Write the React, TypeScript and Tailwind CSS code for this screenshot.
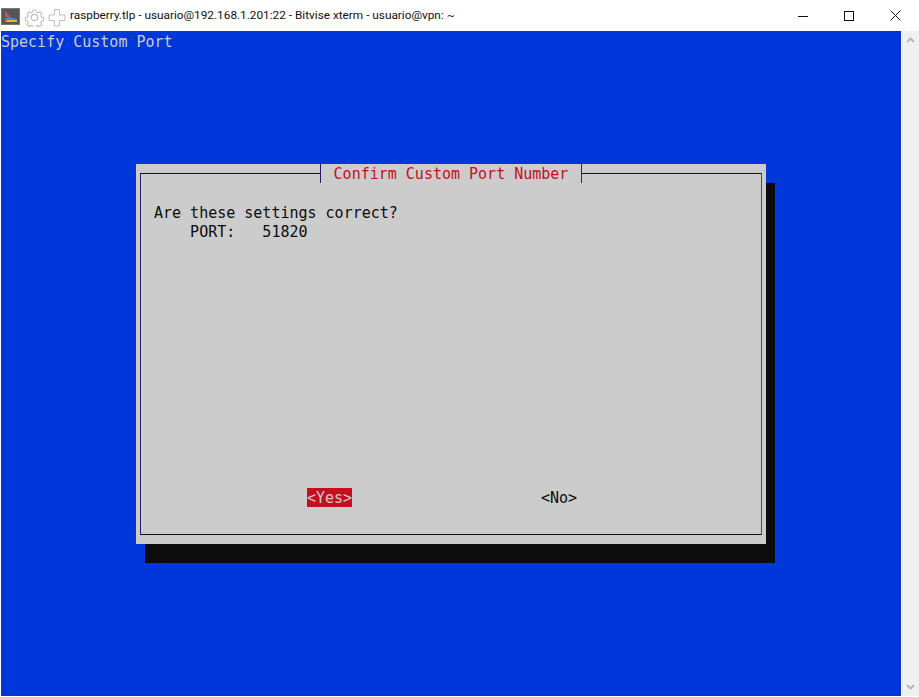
export default function App() {
  const mono = "font-['DejaVu_Sans_Mono',monospace]";
  return (
    <div className="w-[919px] h-[697px] bg-white overflow-hidden flex flex-col">
      <div className="h-[31px] flex items-center shrink-0 font-['Roboto',sans-serif] text-[11.8px] text-[#111]">
        <svg width="20" height="18" viewBox="0 0 20 18" className="ml-[1px] mt-[3px] shrink-0">
          <rect x="0.500" y="0.500" width="18" height="16" fill="#555" stroke="#777" />
          <path d="M4 3v6l6 1-3-4z" fill="#e04a4a" />
          <path d="M3 11l5-2 8 2v1H3z" fill="#2f8fd8" />
          <path d="M6 12h10v2H4z" fill="#f0b030" />
        </svg>
        <svg width="19" height="19" viewBox="0 0 24 24" fill="none" stroke="#bdbdbd" strokeWidth="1.500" className="ml-[4px] mt-[4px] shrink-0">
          <circle cx="12" cy="12" r="4" />
          <path d="M10 1.500h4l.7 3 2.300 1 2.700-1.600 2.800 2.800-1.600 2.700 1 2.300 3 .7v4l-3 .7-1 2.300 1.600 2.700-2.800 2.800-2.700-1.600-2.300 1-.7 3h-4l-.7-3-2.300-1-2.700 1.600-2.800-2.800 1.600-2.700-1-2.300-3-.7v-4l3-.7 1-2.300-1.600-2.700 2.800-2.800 2.700 1.600 2.300-1z" transform="translate(1.300 1.300) scale(.89)" />
        </svg>
        <svg width="18" height="18" viewBox="0 0 18 18" fill="none" stroke="#bdbdbd" strokeWidth="1" className="ml-[4px] mt-[4px] shrink-0">
          <path d="M6.500 .5h5v5.500h5.500v5.500h-5.500v5.500h-5v-5.500h-5.500v-5.500h5.500z" />
        </svg>
        <span className="ml-[4px] whitespace-nowrap">raspberry.tlp - usuario@192.168.1.201:22 - Bitvise xterm - usuario@vpn: ~</span>
        <div className="ml-auto flex items-center">
          <div className="w-[46px] h-[31px] flex items-center justify-center">
            <svg width="10" height="10" viewBox="0 0 10 10"><path d="M0 5.500h10" stroke="#111" /></svg>
          </div>
          <div className="w-[46px] h-[31px] flex items-center justify-center">
            <svg width="10" height="10" viewBox="0 0 10 10" fill="none"><rect x="0.500" y="0.500" width="9" height="9" stroke="#111" /></svg>
          </div>
          <div className="w-[46px] h-[31px] flex items-center justify-center mr-[1px]">
            <svg width="11" height="11" viewBox="0 0 11 11"><path d="M.5.500l10 10M10.500.500l-10 10" stroke="#111" /></svg>
          </div>
        </div>
      </div>
      <div className="flex-1 flex pl-[1px] pb-[1px]">
        <div className={`w-[900px] bg-[#0037da] ${mono} text-[15px] leading-[19px]`}>
          <div className="text-[#cccccc] h-[19px] mt-[1px] leading-[21px]">Specify Custom Port</div>
          <div className="relative ml-[135px] mt-[113px] w-[630px] h-[380px] bg-[#cccccc] shadow-[9px_19px_0_#0c0c0c] text-[#0c0c0c]">
            <div className="absolute left-[4px] top-[9px] w-[622px] h-[362px] border border-t-[#14101c] border-b-[#14101c] border-l-[#2a1a60] border-r-[#5a5030]" />
            <div className="absolute left-[184px] top-0 w-[262px] h-[19px] bg-[#cccccc] border-x border-l-[#2a1a60] border-r-[#3a3020] text-center text-[#c50f1f] leading-[21px]">Confirm Custom Port Number</div>
            <div className="relative pl-[18px] pt-[40px]">
              <div>Are these settings correct?</div>
              <div className="whitespace-pre">{"    PORT:   51820"}</div>
            </div>
            <div className="absolute left-[171px] top-[324px] w-[45px] h-[19px] bg-[#c50f1f] text-[#cccccc] text-center leading-[21px]">&lt;Yes&gt;</div>
            <div className="absolute left-[405px] top-[324px] w-[36px] h-[19px] text-center leading-[21px]">&lt;No&gt;</div>
          </div>
        </div>
        <div className="ml-[1px] w-[17px] bg-[#f0f0f0] flex flex-col items-center justify-between py-[6px]">
          <svg width="9" height="6" viewBox="0 0 9 6" fill="none"><path d="M1 5l3.500-3.500L8 5" stroke="#b8b8b8" strokeWidth="2" /></svg>
          <svg width="9" height="6" viewBox="0 0 9 6" fill="none"><path d="M1 1l3.500 3.500L8 1" stroke="#b8b8b8" strokeWidth="2" /></svg>
        </div>
      </div>
    </div>
  );
}
